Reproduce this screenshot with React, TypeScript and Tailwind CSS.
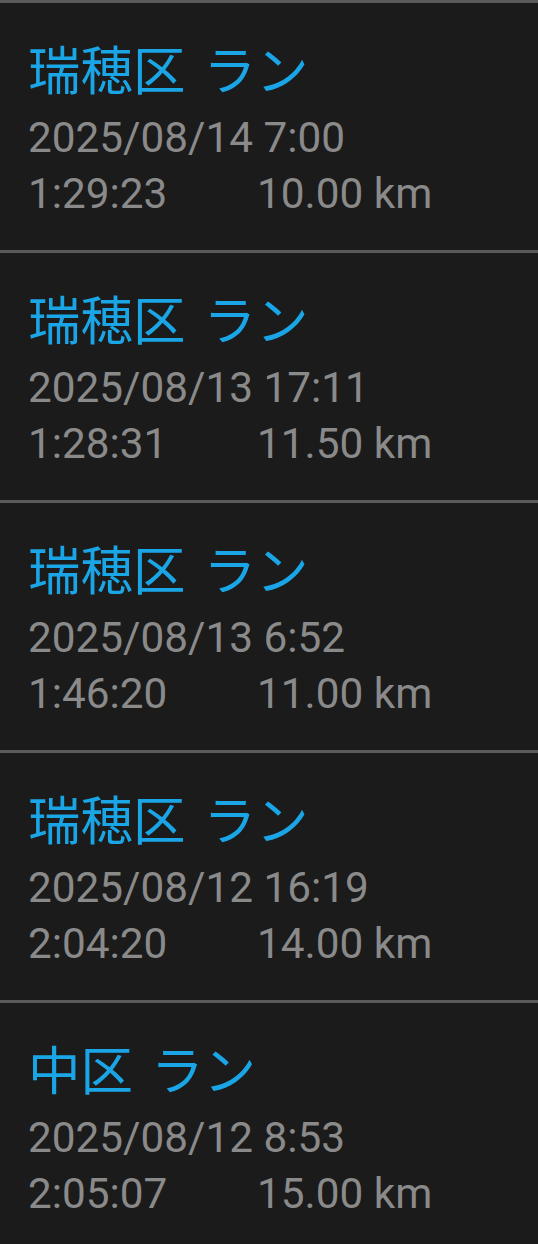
const runs = [
  { title: '瑞穂区 ラン', date: '2025/08/14 7:00', time: '1:29:23', dist: '10.00 km' },
  { title: '瑞穂区 ラン', date: '2025/08/13 17:11', time: '1:28:31', dist: '11.50 km' },
  { title: '瑞穂区 ラン', date: '2025/08/13 6:52', time: '1:46:20', dist: '11.00 km' },
  { title: '瑞穂区 ラン', date: '2025/08/12 16:19', time: '2:04:20', dist: '14.00 km' },
  { title: '中区 ラン', date: '2025/08/12 8:53', time: '2:05:07', dist: '15.00 km' },
];

export default function App() {
  return (
    <div className="min-h-screen bg-[#1b1b1b] font-['Roboto','Noto_Sans_CJK_JP',sans-serif]">
      {runs.map((run, i) => (
        <div key={i} className="h-[250px] border-t-[3px] border-[#5a5a5a] pl-[28px] pt-[37px]">
          <div className="h-[64px] text-[52.5px] leading-[64px] text-[#1aa6e6] [word-spacing:5px]">{run.title}</div>
          <div className="mt-[6px] text-[42.3px] leading-[56px] text-[#8a8a8a]">{run.date}</div>
          <div className="flex text-[42.3px] leading-[56px] text-[#8a8a8a]">
            <span className="w-[229px]">{run.time}</span>
            <span>{run.dist}</span>
          </div>
        </div>
      ))}
    </div>
  );
}
